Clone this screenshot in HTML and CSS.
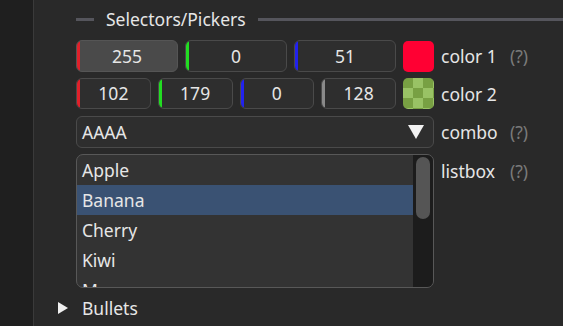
FILE: index.html
```html
<!DOCTYPE html>
<html lang="en">

<head>
    <meta charset="UTF-8">
    <meta name="viewport" content="width=device-width, initial-scale=1.0">
    <title>Selectors/Pickers</title>
    <link rel="stylesheet" href="styles.css">
</head>

<body>

    <div class="sidebar"></div>

    <div class="panel">

        <div class="section-head">
            <span class="dash"></span>
            <span class="section-title">Selectors/Pickers</span>
            <span class="rule"></span>
        </div>

        <div class="row">
            <div class="fields">
                <div class="field red active">255</div>
                <div class="field green">0</div>
                <div class="field blue">51</div>
            </div>
            <div class="swatch swatch-red"></div>
            <span class="label">color 1</span>
            <span class="help">(?)</span>
        </div>

        <div class="row row-rgba">
            <div class="fields">
                <div class="field red">102</div>
                <div class="field green">179</div>
                <div class="field blue">0</div>
                <div class="field gray">128</div>
            </div>
            <div class="swatch swatch-check"></div>
            <span class="label">color 2</span>
        </div>

        <div class="row">
            <div class="combo">
                <span>AAAA</span>
                <span class="arrow"></span>
            </div>
            <span class="label">combo</span>
            <span class="help">(?)</span>
        </div>

        <div class="row row-top">
            <div class="listbox">
                <ul class="items">
                    <li>Apple</li>
                    <li class="selected">Banana</li>
                    <li>Cherry</li>
                    <li>Kiwi</li>
                    <li class="last">Mango</li>
                </ul>
                <div class="scrollbar"><div class="thumb"></div></div>
            </div>
            <span class="label label-top">listbox</span>
            <span class="help label-top">(?)</span>
        </div>

        <div class="tree-node">
            <span class="tri"></span>
            <span>Bullets</span>
        </div>

    </div>

</body>

</html>
```

FILE: styles.css
```css
body {
    margin: 0;
    height: 326px;
    overflow: hidden;
    display: flex;
    background-color: #292929;
    color: #e6e6e6;
    font-family: "Noto Sans", "Open Sans", sans-serif;
    font-size: 17.5px;
}

.sidebar {
    width: 33px;
    flex-shrink: 0;
    background-color: #1f1f1f;
    border-right: 1px solid #3a3a3a;
}

.panel {
    flex: 1;
    display: flex;
    flex-direction: column;
    padding-left: 42px;
}

.section-head {
    height: 38px;
    display: flex;
    align-items: center;
}

.dash {
    width: 18px;
    height: 3px;
    background-color: #55555c;
}

.section-title {
    margin: 0 12px;
    line-height: 20px;
}

.rule {
    flex: 1;
    height: 3px;
    background-color: #55555c;
}

.row {
    display: flex;
    align-items: center;
    margin-top: 2px;
    margin-bottom: 4px;
}

.row-rgba {
    margin-bottom: 5px;
}

.row-top {
    align-items: flex-start;
}

.fields {
    width: 320px;
    display: flex;
    gap: 7px;
}

.field {
    flex: 1;
    box-sizing: border-box;
    height: 32px;
    line-height: 30px;
    text-align: center;
    background-color: #2e2e2e;
    border: 1px solid #4a4a4a;
    border-radius: 6px;
    position: relative;
    overflow: hidden;
}

.row-rgba .field {
    height: 31px;
    line-height: 29px;
}

.field.active {
    background-color: #4a4a4a;
    border-color: #555;
}

.field::before {
    content: "";
    position: absolute;
    left: 0;
    top: 0;
    bottom: 0;
    width: 3px;
}

.red::before {
    background-color: #e0202a;
}

.green::before {
    background-color: #22dd22;
}

.blue::before {
    background-color: #2222ee;
}

.gray::before {
    background-color: #8a8a8a;
}

.swatch {
    width: 31px;
    height: 31px;
    margin-left: 7px;
    border-radius: 5px;
}

.swatch-red {
    background-color: #ff0033;
}

.swatch-check {
    background-color: #78a043;
    background-image:
        linear-gradient(45deg, #99c265 25%, transparent 25%, transparent 75%, #99c265 75%),
        linear-gradient(45deg, #99c265 25%, transparent 25%, transparent 75%, #99c265 75%);
    background-size: 20px 20px;
    background-position: 0 0, 10px 10px;
}

.label {
    margin-left: 7px;
    width: 55px;
    white-space: nowrap;
}

.help {
    margin-left: 14px;
    color: #7a7a7a;
}

.label-top {
    margin-top: 5px;
}

.combo {
    width: 358px;
    height: 32px;
    box-sizing: border-box;
    display: flex;
    align-items: center;
    justify-content: space-between;
    padding: 0 9px 0 5px;
    background-color: #2e2e2e;
    border: 1px solid #4a4a4a;
    border-radius: 6px;
}

.arrow {
    width: 0;
    height: 0;
    border-left: 8px solid transparent;
    border-right: 8px solid transparent;
    border-top: 14px solid #f2f2f2;
}

.listbox {
    width: 358px;
    height: 134px;
    box-sizing: border-box;
    display: flex;
    background-color: #333333;
    border: 1px solid #585858;
    border-radius: 7px;
    overflow: hidden;
}

.items {
    flex: 1;
    list-style: none;
    margin: 0;
    padding: 0;
    overflow: hidden;
}

.items li {
    height: 30px;
    line-height: 30px;
    padding-left: 5px;
}

.items li.last {
    height: 12px;
    overflow: hidden;
}

.items li.selected {
    background-color: #3a5273;
}

.scrollbar {
    width: 20px;
    background-color: #1c1c1c;
    padding: 2px 3px;
    box-sizing: border-box;
}

.thumb {
    height: 62px;
    border-radius: 8px;
    background-color: #555555;
}

.tree-node {
    margin-top: 4px;
    margin-left: -18px;
    display: flex;
    align-items: center;
    gap: 14px;
}

.tri {
    width: 0;
    height: 0;
    border-top: 6px solid transparent;
    border-bottom: 6px solid transparent;
    border-left: 10px solid #f0f0f0;
}
```
